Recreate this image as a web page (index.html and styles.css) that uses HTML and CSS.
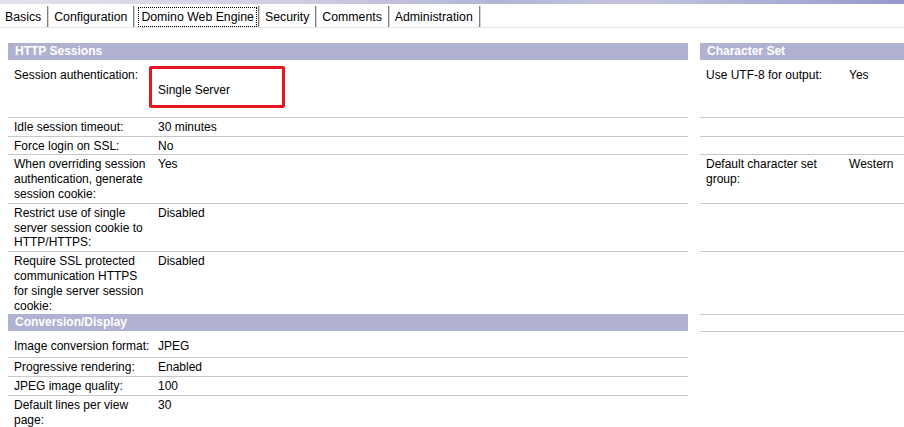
FILE: index.html
```html
<!DOCTYPE html>
<html lang="en">
<head>
    <meta charset="UTF-8">
    <title>Domino Web Engine</title>
    <link rel="stylesheet" href="styles.css">
</head>
<body>
    <div class="banner"></div>
    <div class="tabs">
        <div class="tab">Basics</div>
        <div class="tab">Configuration</div>
        <div class="tab active"><span>Domino Web Engine</span></div>
        <div class="tab">Security</div>
        <div class="tab">Comments</div>
        <div class="tab">Administration</div>
    </div>

    <table class="form">
        <colgroup>
            <col class="c-lbl">
            <col class="c-val">
            <col class="c-gap">
            <col class="c-rlbl">
            <col class="c-rval">
        </colgroup>
        <tr class="head">
            <th colspan="2">HTTP Sessions</th>
            <td class="gap"></td>
            <th colspan="2">Character Set</th>
        </tr>
        <tr class="first">
            <td class="line">Session authentication:</td>
            <td class="line"><div class="callout">Single Server</div></td>
            <td class="gap"></td>
            <td class="line">Use UTF-8 for output:</td>
            <td class="line">Yes</td>
        </tr>
        <tr>
            <td class="line">Idle session timeout:</td>
            <td class="line">30 minutes</td>
            <td class="gap"></td>
            <td class="line"></td>
            <td class="line"></td>
        </tr>
        <tr>
            <td class="line">Force login on SSL:</td>
            <td class="line">No</td>
            <td class="gap"></td>
            <td class="line"></td>
            <td class="line"></td>
        </tr>
        <tr>
            <td class="line">When overriding session authentication, generate session cookie:</td>
            <td class="line">Yes</td>
            <td class="gap"></td>
            <td class="line">Default character set group:</td>
            <td class="line">Western</td>
        </tr>
        <tr>
            <td class="line">Restrict use of single server session cookie to HTTP/HTTPS:</td>
            <td class="line">Disabled</td>
            <td class="gap"></td>
            <td class="line"></td>
            <td class="line"></td>
        </tr>
        <tr>
            <td>Require SSL protected communication HTTPS for single server session cookie:</td>
            <td>Disabled</td>
            <td class="gap"></td>
            <td class="line"></td>
            <td class="line"></td>
        </tr>
        <tr class="head">
            <th colspan="2">Conversion/Display</th>
            <td class="gap"></td>
            <td class="line"></td>
            <td class="line"></td>
        </tr>
        <tr class="first">
            <td class="line">Image conversion format:</td>
            <td class="line">JPEG</td>
            <td class="gap"></td>
            <td></td>
            <td></td>
        </tr>
        <tr>
            <td class="line">Progressive rendering:</td>
            <td class="line">Enabled</td>
            <td class="gap"></td>
            <td></td>
            <td></td>
        </tr>
        <tr>
            <td class="line">JPEG image quality:</td>
            <td class="line">100</td>
            <td class="gap"></td>
            <td></td>
            <td></td>
        </tr>
        <tr>
            <td>Default lines per view page:</td>
            <td>30</td>
            <td class="gap"></td>
            <td></td>
            <td></td>
        </tr>
    </table>
</body>
</html>
```

FILE: styles.css
```css
html, body {
    overflow: hidden;
}
body {
    margin: 0;
    font-family: "Liberation Sans", Arial, sans-serif;
    font-size: 12px;
    color: #000;
    background: #fff;
}
.banner {
    height: 4px;
    background: linear-gradient(90deg, #e2e2ec 0%, #d0d0e4 30%, #b4b4d8 55%, #c4c4e0 70%, #9898cc 100%);
}
.tabs {
    display: flex;
    padding-top: 2px;
    border-bottom: 1px solid #e6e6e6;
    font-size: 12.3px;
}
.tab {
    height: 21px;
    line-height: 22px;
    padding: 0 6px;
    border-right: 1px solid #7e7e7e;
    box-shadow: 1px 0 0 #d4d4d4;
    white-space: nowrap;
}
.tab:first-child {
    padding-left: 5px;
}
.tab.active {
    display: flex;
    align-items: center;
    padding: 0 1px 0 4px;
}
.tab.active span {
    line-height: 18px;
    padding: 0 2px;
    border: 1px dotted #000;
}
.form {
    margin: 15px 0 0 8px;
    width: 896px;
    table-layout: fixed;
    border-collapse: collapse;
}
.c-lbl { width: 144px; }
.c-val { width: 536px; }
.c-gap { width: 12px; }
.c-rlbl { width: 143px; }
.c-rval { width: 61px; }
.form td {
    padding: 2px 0 1px 6px;
    line-height: 14.8px;
    vertical-align: top;
}
.form td.gap {
    padding: 0;
}
.form td.line {
    border-bottom: 1px solid #c8c8c8;
}
.form tr.first td {
    padding-top: 8px;
    padding-bottom: 3px;
}
.form tr.first td.gap {
    padding: 0;
}
.form th {
    height: 17px;
    padding: 0 7px;
    line-height: 17px;
    background: #b1b1d1;
    color: #fff;
    font-weight: bold;
    text-align: left;
}
.callout {
    box-sizing: border-box;
    width: 136px;
    margin: -2px 0 6px -9px;
    padding: 14px 6px 7px;
    border: 3px solid #e5141d;
    border-radius: 2px;
}
```
